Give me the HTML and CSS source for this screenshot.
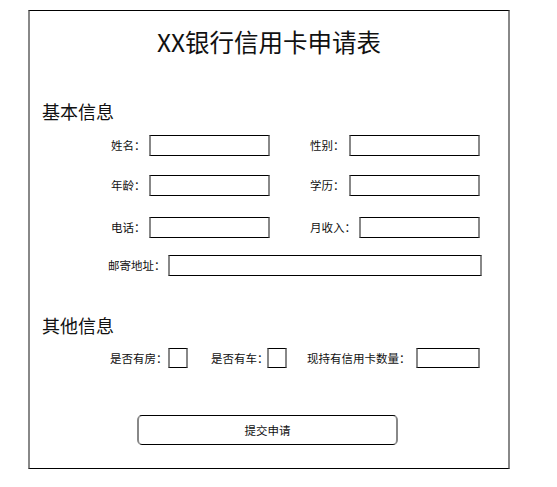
FILE: index.html
```html
<!DOCTYPE html>
<html lang="zh-CN">
<head>
    <meta charset="UTF-8">
    <meta name="viewport" content="width=device-width, initial-scale=1.0">
    <title>XX银行信用卡申请表</title>
    <link rel="stylesheet" href="styles.css">
</head>
<body>
<div class="sheet">
    <h1 class="title">XX银行信用卡申请表</h1>

    <h2 class="section">基本信息</h2>
    <div class="row">
        <label class="label label-short">姓名：</label>
        <input type="text" class="box box-name">
        <label class="label label-right">性别：</label>
        <input type="text" class="box box-wide">
    </div>
    <div class="row">
        <label class="label label-short">年龄：</label>
        <input type="text" class="box box-name">
        <label class="label label-right">学历：</label>
        <input type="text" class="box box-wide">
    </div>
    <div class="row row-phone">
        <label class="label label-short">电话：</label>
        <input type="text" class="box box-name">
        <label class="label label-right label-income">月收入：</label>
        <input type="text" class="box box-name">
    </div>
    <div class="row row-address">
        <label class="label">邮寄地址：</label>
        <input type="text" class="box box-address">
    </div>

    <h2 class="section section-other">其他信息</h2>
    <div class="row row-other">
        <label class="label">是否有房：</label>
        <span class="box box-check"></span>
        <label class="label label-car">是否有车：</label>
        <span class="box box-check"></span>
        <label class="label label-cards">现持有信用卡数量：</label>
        <input type="text" class="box box-count">
    </div>

    <button type="button" class="submit">提交申请</button>
</div>
</body>
</html>
```

FILE: styles.css
```css
body {
    margin: 0;
    font-family: "Noto Sans CJK SC", "Noto Sans", sans-serif;
    color: #111;
    background: #fff;
}
.sheet {
    box-sizing: border-box;
    width: 482px;
    height: 459px;
    margin: 10px 0 0 28px;
    border-style: solid;
    border-width: 1px 2px;
    border-color: #000 #888;
}
.title {
    margin: 11px 0 0;
    font-size: 24.5px;
    font-weight: normal;
    line-height: 40px;
    text-align: center;
}
.section {
    margin: 37px 0 0 12px;
    font-size: 18px;
    font-weight: normal;
    line-height: 24px;
}
.section-other {
    margin-top: 37px;
}
.row {
    display: flex;
    align-items: center;
    height: 21px;
    margin-top: 19px;
    padding-left: 81px;
}
.section + .row {
    margin-top: 12px;
}
.row-phone {
    margin-top: 21px;
}
.row-address {
    margin-top: 17px;
    padding-left: 78px;
}
.label {
    font-size: 11.5px;
    line-height: 21px;
    white-space: nowrap;
}
.label-short {
    width: 38px;
}
.label-right {
    width: 39px;
    margin-left: 40px;
}
.label-income {
    width: 49px;
}
.row-address .label {
    width: 60px;
}
.box {
    box-sizing: border-box;
    display: block;
    height: 21px;
    padding: 0;
    margin: 0;
    border-style: solid;
    border-width: 1px 2px;
    border-color: #000 #888;
    background: #fff;
    border-radius: 0;
    outline: none;
}
.box-name {
    width: 121px;
}
.box-wide {
    width: 131px;
}
.box-address {
    width: 314px;
}
.section + .row-other {
    margin-top: 11px;
    height: 20px;
}
.row-other {
    padding-left: 80px;
}
.row-other .label {
    width: 58px;
}
.row-other .label-car {
    width: 56px;
    margin-left: 23px;
}
.row-other .label-cards {
    width: 109px;
    margin-left: 20px;
}
.box-check {
    width: 20px;
    height: 20px;
}
.box-count {
    width: 64px;
    height: 20px;
}
.submit {
    display: block;
    box-sizing: border-box;
    width: 261px;
    height: 30px;
    margin: 47px 0 0 107px;
    padding: 0;
    font-family: inherit;
    font-size: 11.5px;
    color: #111;
    background: #fff;
    border-style: solid;
    border-width: 1px 2px;
    border-color: #000 #888;
    border-radius: 5px;
    cursor: pointer;
}
```
